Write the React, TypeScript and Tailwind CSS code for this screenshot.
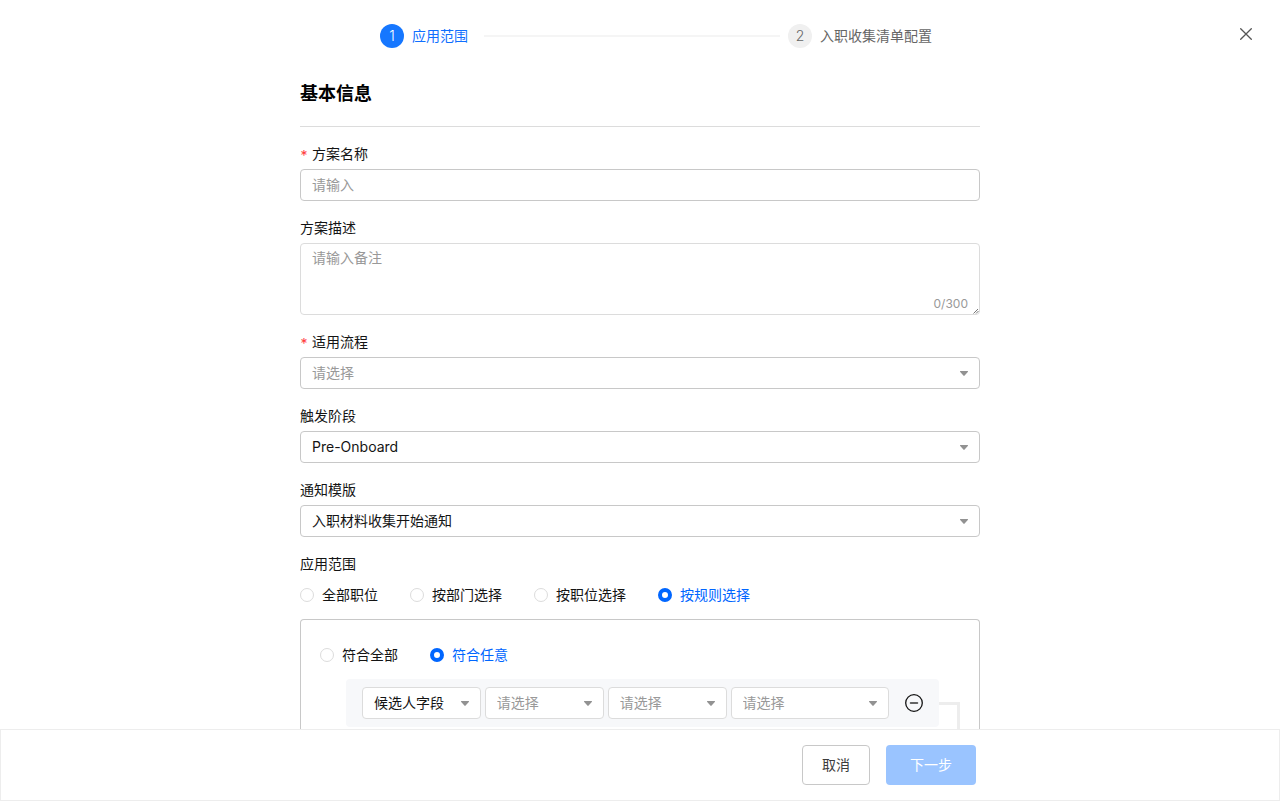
import { useState } from "react";
import type { ReactNode, SelectHTMLAttributes } from "react";

const SCOPES = ["全部职位", "按部门选择", "按职位选择", "按规则选择"];
const MATCH_MODES = ["符合全部", "符合任意"];
const MAX_DESCRIPTION = 300;

function Caret() {
  return (
    <svg
      viewBox="0 0 8 6"
      aria-hidden="true"
      className="pointer-events-none absolute top-1/2 right-3 h-1.5 w-2 -translate-y-1/2 fill-[#929292]"
    >
      <path d="M.6 1h6.8a.5.5 0 0 1 .4.9L4.6 5.6a.8.8 0 0 1-1.2 0L.2 1.9A.5.5 0 0 1 .6 1z" />
    </svg>
  );
}

interface SelectProps extends SelectHTMLAttributes<HTMLSelectElement> {
  options?: string[];
  placeholder?: string;
  light?: boolean;
}

function Select({ options = [], placeholder, light, ...rest }: SelectProps) {
  return (
    <div className="relative min-w-0">
      <select
        {...rest}
        className={`block h-8 w-full appearance-none rounded border bg-white pr-7 pl-[11px] text-sm outline-none focus:border-[#0066ff] ${
          light ? "border-[#dcdcdc]" : "border-[#c8c8c8]"
        } ${placeholder ? "text-[#999]" : "text-[#141414]"}`}
      >
        {placeholder && <option value="">{placeholder}</option>}
        {options.map((o) => (
          <option key={o}>{o}</option>
        ))}
      </select>
      <Caret />
    </div>
  );
}

function Field({ id, label, required, children }: { id: string; label: string; required?: boolean; children: ReactNode }) {
  return (
    <div className="mt-4">
      <label htmlFor={id} className="mb-1 flex h-[22px] items-center gap-1">
        {required && <span className="flex w-2 justify-center pt-1 text-[#ff3b3b]">*</span>}
        {label}
      </label>
      {children}
    </div>
  );
}

interface RadioGroupProps {
  name: string;
  options: string[];
  value: string;
  onChange: (value: string) => void;
}

function RadioGroup({ name, options, value, onChange }: RadioGroupProps) {
  return (
    <div role="radiogroup" aria-label={name} className="flex h-8 items-center gap-8">
      {options.map((o) => (
        <label key={o} className={`flex cursor-pointer items-center gap-2 ${value === o ? "text-[#0066ff]" : ""}`}>
          <input
            type="radio"
            name={name}
            checked={value === o}
            onChange={() => onChange(o)}
            className="size-3.5 appearance-none rounded-full border border-[#dcdcdc] bg-white checked:border-4 checked:border-[#0066ff]"
          />
          {o}
        </label>
      ))}
    </div>
  );
}

export default function App() {
  const [description, setDescription] = useState("");
  const [scope, setScope] = useState("按规则选择");
  const [matchMode, setMatchMode] = useState("符合任意");

  return (
    <div className="flex h-screen flex-col bg-white font-['Inter','Noto_Sans_CJK_SC',sans-serif] text-sm leading-[22px] text-[#141414]">
      <main className="flex flex-1 flex-col overflow-y-auto">
        {/* Steps */}
        <header className="grid h-[72px] shrink-0 grid-cols-[1fr_minmax(0,680px)_1fr] items-center">
          <ol className="col-start-2 flex items-center pr-12 pl-20">
            <li className="flex flex-1 items-center gap-2 text-[#0f6fff]">
              <span className="flex size-6 items-center justify-center rounded-full bg-[#1677ff] font-light text-white">1</span>
              应用范围
              <span className="mx-2 h-0.5 flex-1 bg-[#f5f5f5]" />
            </li>
            <li className="flex items-center gap-2 text-[#666]">
              <span className="flex size-6 items-center justify-center rounded-full bg-[#f0f0f0] font-light text-[#666]">2</span>
              入职收集清单配置
            </li>
          </ol>
          <button type="button" aria-label="关闭" className="mr-6 mb-1 flex size-5 cursor-pointer items-center justify-center justify-self-end">
            <svg viewBox="0 0 12 12" className="size-3 stroke-[#555] stroke-[1.3]" strokeLinecap="round">
              <path d="M.7.7l10.6 10.6M11.3.7L.7 11.3" />
            </svg>
          </button>
        </header>

        <form id="plan" className="mx-auto flex w-full max-w-[680px] flex-1 flex-col">
          <h1 className="border-b border-[#dcdcdc] pt-2 pb-[18px] text-lg leading-7 font-bold text-black">基本信息</h1>

          <Field id="name" label="方案名称" required>
            <input
              id="name"
              type="text"
              placeholder="请输入"
              className="block w-full rounded border border-[#c8c8c8] px-[11px] py-1 outline-none placeholder:text-[#999] focus:border-[#0066ff]"
            />
          </Field>

          <Field id="description" label="方案描述">
            <div className="relative">
              <textarea
                id="description"
                placeholder="请输入备注"
                maxLength={MAX_DESCRIPTION}
                value={description}
                onChange={(e) => setDescription(e.target.value)}
                className="block h-[72px] w-full resize-y rounded border border-[#dcdcdc] px-[11px] py-[3px] outline-none placeholder:text-[#999] focus:border-[#0066ff] [&::-webkit-resizer]:bg-transparent"
              />
              <span className="pointer-events-none absolute right-3 bottom-0 text-xs leading-[22px] text-[#999]">
                {description.length}/{MAX_DESCRIPTION}
              </span>
              <svg viewBox="0 0 6 6" aria-hidden="true" className="pointer-events-none absolute right-px bottom-px size-1.5 stroke-[#777] stroke-1">
                <path d="M.5 5.5l4.5-4.5M3 5.5L5.5 3" />
              </svg>
            </div>
          </Field>

          <Field id="process" label="适用流程" required>
            <Select id="process" placeholder="请选择" />
          </Field>

          <Field id="stage" label="触发阶段">
            <Select id="stage" options={["Pre-Onboard"]} />
          </Field>

          <Field id="template" label="通知模版">
            <Select id="template" options={["入职材料收集开始通知"]} />
          </Field>

          <div className="mt-4">
            <div className="mb-1">应用范围</div>
            <RadioGroup name="应用范围" options={SCOPES} value={scope} onChange={setScope} />
          </div>

          {/* Rules */}
          <div className="mt-2 flex flex-1 flex-col rounded-t border border-b-0 border-[#c8c8c8] px-[19px] pt-[19px]">
            <RadioGroup name="匹配方式" options={MATCH_MODES} value={matchMode} onChange={setMatchMode} />
            <div className="mt-2 flex flex-1 items-start pl-[26px]">
              <div className="flex h-12 flex-1 items-center gap-4 rounded bg-[#f7f8fa] px-4">
                <div className="grid flex-1 grid-cols-[3fr_3fr_3fr_4fr] gap-1">
                  <Select light aria-label="字段类型" options={["候选人字段"]} />
                  <Select light aria-label="字段" placeholder="请选择" />
                  <Select light aria-label="条件" placeholder="请选择" />
                  <Select light aria-label="值" placeholder="请选择" />
                </div>
                <button type="button" aria-label="删除" className="cursor-pointer">
                  <svg viewBox="0 0 18 18" fill="none" className="size-[18px]">
                    <circle cx="9" cy="9" r="8.3" className="stroke-[#141414] stroke-[1.3]" />
                    <path d="M5.5 9h7" className="stroke-[#333] stroke-[1.5]" strokeLinecap="round" />
                  </svg>
                </button>
              </div>
              <div className="mt-[23px] w-[21px] self-stretch border-t-[3px] border-r-[3px] border-[#ededed]" />
            </div>
          </div>
        </form>
      </main>

      <footer className="border border-[#ededed] bg-white py-[15px]">
        <div className="mx-auto flex w-full max-w-[680px] justify-end gap-4 pr-1">
          <button type="button" className="h-10 cursor-pointer rounded border border-[#c8c8c8] px-[19px] text-[#3c3c3c]">
            取消
          </button>
          <button type="submit" form="plan" disabled className="h-10 rounded bg-[#9ac4ff] px-6 text-white">
            下一步
          </button>
        </div>
      </footer>
    </div>
  );
}
